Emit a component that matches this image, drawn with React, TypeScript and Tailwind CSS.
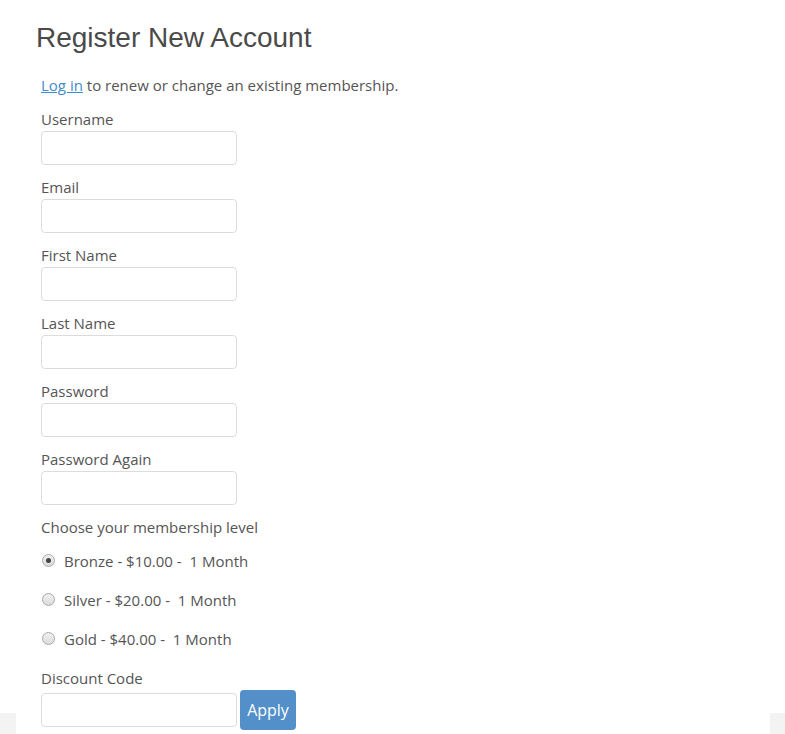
import React from 'react';

const fields = ['Username', 'Email', 'First Name', 'Last Name', 'Password', 'Password Again'];

const levels = [
  { name: 'Bronze - $10.00 -  1 Month', checked: true },
  { name: 'Silver - $20.00 -  1 Month', checked: false },
  { name: 'Gold - $40.00 -  1 Month', checked: false },
];

function Radio({ checked }: { checked: boolean }) {
  return (
    <span className="flex h-[13px] w-[13px] items-center justify-center rounded-full border border-[#a9a9a9] bg-gradient-to-b from-[#f0f0f0] to-[#dcdcdc]">
      {checked && <span className="h-[5px] w-[5px] rounded-full bg-[#444]" />}
    </span>
  );
}

export default function App() {
  return (
    <div className="flex h-[734px] w-[785px] bg-white text-[#555] font-['Open_Sans',sans-serif]">
      <div className="flex w-[16px] flex-col justify-end">
        <div className="h-[21px] bg-[#f3f3f3]" />
      </div>
      <main className="flex-1 pl-[20px]">
        <h1 className="mt-[21px] text-[28px] leading-[34px] font-['Liberation_Sans',Arial,sans-serif] text-[#4a4a4a]">
          Register New Account
        </h1>
        <div className="pl-[5px]">
          <p className="mt-[20px] text-[15px] leading-[20px]">
            <a href="#" className="text-[#428bca] underline">Log in</a> to renew or change an existing membership.
          </p>
          <div className="mt-[14px] flex flex-col gap-[12px]">
            {fields.map((f) => (
              <div key={f}>
                <label className="block text-[15px] leading-[20px]">{f}</label>
                <input
                  type={f.startsWith('Password') ? 'password' : 'text'}
                  className="mt-[2px] block h-[34px] w-[196px] rounded-[4px] border border-[#dcdcdc] bg-white outline-none"
                />
              </div>
            ))}
          </div>
          <p className="mt-[12px] text-[15px] leading-[20px]">Choose your membership level</p>
          <div className="mt-[4px] flex flex-col">
            {levels.map((l) => (
              <div key={l.name} className="flex h-[39px] items-center">
                <span className="ml-[1px] mr-[9px]">
                  <Radio checked={l.checked} />
                </span>
                <span className="text-[15px] leading-[20px] whitespace-pre">{l.name}</span>
              </div>
            ))}
          </div>
          <label className="mt-[10px] block text-[15px] leading-[20px]">Discount Code</label>
          <div className="mt-[2px] flex items-center gap-[3px]">
            <input type="text" className="block h-[34px] w-[196px] rounded-[4px] border border-[#dcdcdc] bg-white outline-none" />
            <button className="h-[40px] w-[56px] rounded-[4px] bg-[#538fc9] text-[16px] text-white">Apply</button>
          </div>
        </div>
      </main>
      <div className="flex w-[15px] flex-col justify-end">
        <div className="h-[21px] bg-[#f3f3f3]" />
      </div>
    </div>
  );
}
